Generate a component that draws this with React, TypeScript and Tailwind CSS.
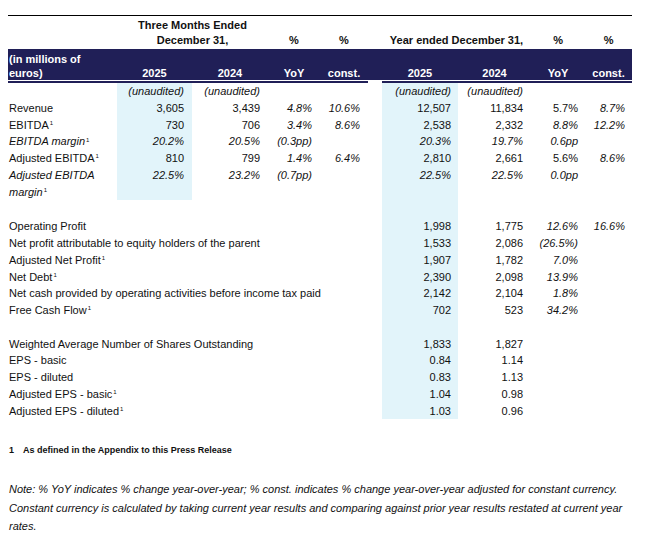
import type { ReactNode } from 'react'

type Cell = { v: string; i?: boolean }

type Row = {
  label: string
  sup?: boolean
  italic?: boolean
  q?: Cell[]
  y: Cell[]
}

const c = (v: string, i = false): Cell => ({ v, i })

const TOP_ROWS: Row[] = [
  {
    label: 'Revenue',
    q: [c('3,605'), c('3,439'), c('4.8%', true), c('10.6%', true)],
    y: [c('12,507'), c('11,834'), c('5.7%'), c('8.7%', true)],
  },
  {
    label: 'EBITDA',
    sup: true,
    q: [c('730'), c('706'), c('3.4%', true), c('8.6%', true)],
    y: [c('2,538'), c('2,332'), c('8.8%', true), c('12.2%', true)],
  },
  {
    label: 'EBITDA margin',
    sup: true,
    italic: true,
    q: [c('20.2%', true), c('20.5%', true), c('(0.3pp)', true), c('')],
    y: [c('20.3%', true), c('19.7%', true), c('0.6pp', true), c('')],
  },
  {
    label: 'Adjusted EBITDA',
    sup: true,
    q: [c('810'), c('799'), c('1.4%', true), c('6.4%', true)],
    y: [c('2,810'), c('2,661'), c('5.6%'), c('8.6%', true)],
  },
  {
    label: 'Adjusted EBITDA margin',
    sup: true,
    italic: true,
    q: [c('22.5%', true), c('23.2%', true), c('(0.7pp)', true), c('')],
    y: [c('22.5%', true), c('22.5%', true), c('0.0pp', true), c('')],
  },
]

const PROFIT_ROWS: Row[] = [
  { label: 'Operating Profit', y: [c('1,998'), c('1,775'), c('12.6%', true), c('16.6%', true)] },
  { label: 'Net profit attributable to equity holders of the parent', y: [c('1,533'), c('2,086'), c('(26.5%)', true), c('')] },
  { label: 'Adjusted Net Profit', sup: true, y: [c('1,907'), c('1,782'), c('7.0%', true), c('')] },
  { label: 'Net Debt', sup: true, y: [c('2,390'), c('2,098'), c('13.9%', true), c('')] },
  { label: 'Net cash provided by operating activities before income tax paid', y: [c('2,142'), c('2,104'), c('1.8%', true), c('')] },
  { label: 'Free Cash Flow', sup: true, y: [c('702'), c('523'), c('34.2%', true), c('')] },
]

const SHARE_ROWS: Row[] = [
  { label: 'Weighted Average Number of Shares Outstanding', y: [c('1,833'), c('1,827'), c(''), c('')] },
  { label: 'EPS - basic', y: [c('0.84'), c('1.14'), c(''), c('')] },
  { label: 'EPS - diluted', y: [c('0.83'), c('1.13'), c(''), c('')] },
  { label: 'Adjusted EPS - basic', sup: true, y: [c('1.04'), c('0.98'), c(''), c('')] },
  { label: 'Adjusted EPS - diluted', sup: true, y: [c('1.03'), c('0.96'), c(''), c('')] },
]

// right padding per value column: quarter (4) then year (4)
const Q_PAD = ['pr-2', 'pr-2', 'pr-2', 'pr-2']
const Y_PAD = ['pr-[7px]', 'pr-2', 'pr-[7px]', 'pr-[7px]']

const BLUE = 'bg-[#e2f4fa]'

function Sup() {
  return <sup className="text-[6px] top-[-0.6em] ml-px not-italic leading-none">1</sup>
}

function Label({ row }: { row: Row }) {
  return (
    <span className={row.italic ? 'italic' : ''}>
      {row.label}
      {row.sup && <Sup />}
    </span>
  )
}

function Val({ cell, pad, blue }: { cell: Cell; pad: string; blue?: boolean }) {
  return (
    <td className={`${pad} text-right align-top whitespace-nowrap ${cell.i ? 'italic' : ''} ${blue ? BLUE : ''}`}>
      {cell.v}
    </td>
  )
}

function YearCells({ row }: { row: Row }) {
  return (
    <>
      {row.y.map((cell, i) => (
        <Val key={i} cell={cell} pad={Y_PAD[i]} blue={i === 0} />
      ))}
    </>
  )
}

function HeadCell({ children, span = 1 }: { children: ReactNode; span?: number }) {
  return (
    <th colSpan={span} className="text-center align-bottom font-bold pb-[1px] leading-[15px]">
      {children}
    </th>
  )
}

export default function App() {
  return (
    <div
      className="w-[652px] h-[542px] bg-white text-[#111] px-[8px] pt-[15px] text-[11px]"
      style={{ fontFamily: '"Liberation Sans", Arial, sans-serif' }}
    >
      <div className="h-px w-[624px] bg-black" />
      <table className="w-[624px] table-fixed border-collapse leading-[16.75px]">
        <colgroup>
          <col className="w-[109px]" />
          <col className="w-[75px]" />
          <col className="w-[76px]" />
          <col className="w-[52px]" />
          <col className="w-[48px]" />
          <col className="w-[14px]" />
          <col className="w-[76px]" />
          <col className="w-[73px]" />
          <col className="w-[54px]" />
          <col className="w-[47px]" />
        </colgroup>
        <thead>
          <tr className="h-[33px]">
            <th />
            <HeadCell span={2}>
              Three Months Ended
              <br />
              December 31,
            </HeadCell>
            <HeadCell>%</HeadCell>
            <HeadCell>%</HeadCell>
            <th />
            <HeadCell span={2}>Year ended December 31,</HeadCell>
            <HeadCell>%</HeadCell>
            <HeadCell>%</HeadCell>
          </tr>
          <tr className="h-[31px] bg-[#201f57] text-white">
            <th className="text-left align-bottom font-bold leading-[14px] pb-0 pl-px">
              (in millions of
              <br />
              euros)
            </th>
            {['2025', '2024', 'YoY', 'const.', '', '2025', '2024', 'YoY', 'const.'].map((h, i) => (
              <th key={i} className="align-bottom font-bold leading-[14px] pb-0 text-center">
                {h}
              </th>
            ))}
          </tr>
          <tr className="h-[3px]">
            {Array.from({ length: 10 }).map((_, i) => (
              <th key={i} className="p-0">
                {i !== 5 && <div className="h-[3px] border-t border-white bg-[#201f57]" />}
              </th>
            ))}
          </tr>
        </thead>
        <tbody>
          <tr className="h-[16px]">
            <td />
            <td className={`${BLUE} pr-2 text-right italic`}>(unaudited)</td>
            <td className="pr-2 text-right italic">(unaudited)</td>
            <td />
            <td />
            <td />
            <td className={`${BLUE} pr-[7px] text-right italic`}>(unaudited)</td>
            <td className="pr-2 text-right italic">(unaudited)</td>
            <td />
            <td />
          </tr>

          {TOP_ROWS.map((row) => (
            <tr key={row.label} className="h-[16.75px]">
              <td className="pl-px align-top">
                <Label row={row} />
              </td>
              {row.q!.map((cell, i) => (
                <Val key={i} cell={cell} pad={Q_PAD[i]} blue={i === 0} />
              ))}
              <td />
              <YearCells row={row} />
            </tr>
          ))}

          <tr className="h-[18px]">
            <td colSpan={6} />
            <td className={BLUE} />
            <td colSpan={3} />
          </tr>

          {PROFIT_ROWS.map((row) => (
            <tr key={row.label} className="h-[16.75px]">
              <td colSpan={6} className="pl-px whitespace-nowrap">
                <Label row={row} />
              </td>
              <YearCells row={row} />
            </tr>
          ))}

          <tr className="h-[16.75px]">
            <td colSpan={6} />
            <td className={BLUE} />
            <td colSpan={3} />
          </tr>

          {SHARE_ROWS.map((row) => (
            <tr key={row.label} className="h-[16.75px]">
              <td colSpan={6} className="pl-px whitespace-nowrap">
                <Label row={row} />
              </td>
              <YearCells row={row} />
            </tr>
          ))}
        </tbody>
      </table>

      <p className="mt-[25px] text-[9px] font-bold leading-[12px] pl-px">
        <span className="mr-[9px]">1</span>As defined in the Appendix to this Press Release
      </p>

      <p className="mt-[24px] italic leading-[18.5px] pl-px">
        Note: % YoY indicates % change year-over-year; % const. indicates % change year-over-year adjusted for constant currency.
        Constant currency is calculated by taking current year results and comparing against prior year results restated at current year
        rates.
      </p>
    </div>
  )
}
